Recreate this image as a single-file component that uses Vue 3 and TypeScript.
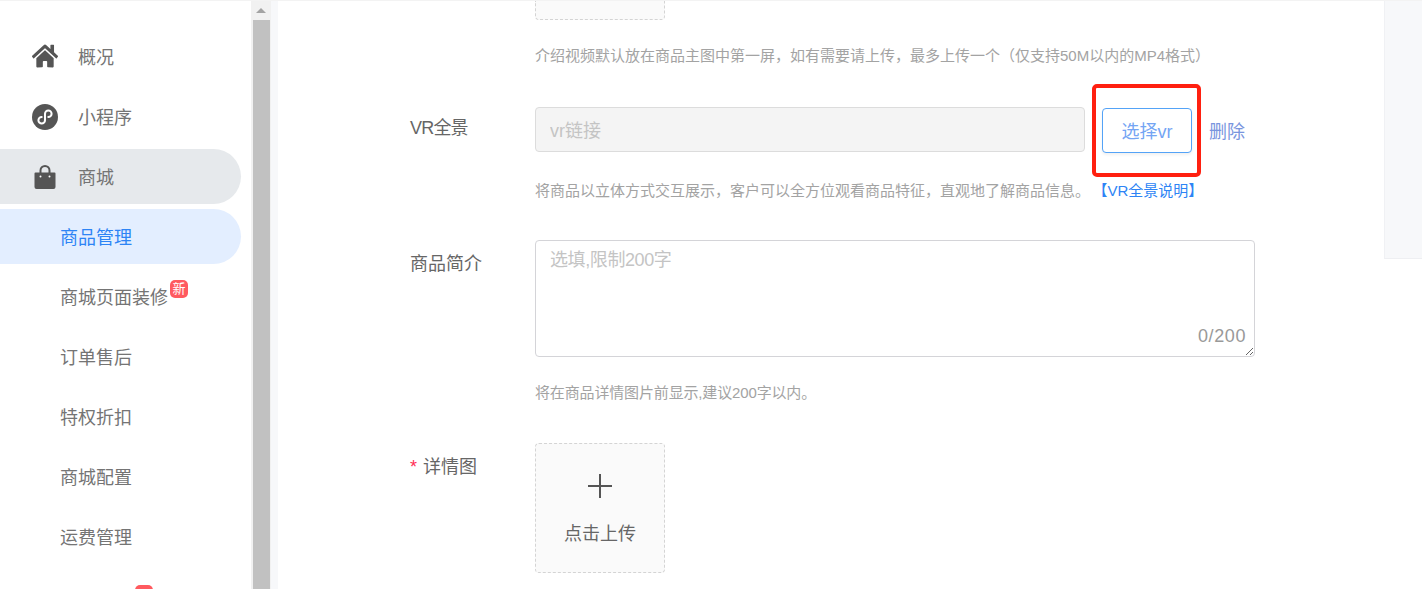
<script setup lang="ts">
interface MenuItem {
  label: string
  icon?: 'home' | 'mini' | 'bag'
  badge?: 'top' | 'low'
  state?: 'open' | 'active'
}

const menu: MenuItem[] = [
  { label: '概况', icon: 'home' },
  { label: '小程序', icon: 'mini' },
  { label: '商城', icon: 'bag', state: 'open' },
  { label: '商品管理', state: 'active' },
  { label: '商城页面装修', badge: 'top' },
  { label: '订单售后' },
  { label: '特权折扣' },
  { label: '商城配置' },
  { label: '运费管理' },
  { label: '', badge: 'low' }
]
</script>

<template>
  <div class="page">
    <aside class="sidebar">
      <ul class="menu">
        <li
          v-for="item in menu"
          :key="item.label"
          class="menu-item"
          :class="[item.state, { child: !item.icon }]"
        >
          <span v-if="item.icon" class="menu-icon">
            <svg v-if="item.icon === 'home'" class="i-home" viewBox="0 0 576 512" preserveAspectRatio="none">
              <path fill="#555" d="M280.37 148.26L96 300.11V464a16 16 0 0 0 16 16l112.06-.29a16 16 0 0 0 15.92-16V368a16 16 0 0 1 16-16h64a16 16 0 0 1 16 16v95.64a16 16 0 0 0 16 16.05L464 480a16 16 0 0 0 16-16V300L295.67 148.26a12.19 12.19 0 0 0-15.3 0zM571.6 251.47L488 182.56V44.05a12 12 0 0 0-12-12h-56a12 12 0 0 0-12 12v72.61L318.47 43a48 48 0 0 0-61 0L4.34 251.47a12 12 0 0 0-1.6 16.9l25.5 31A12 12 0 0 0 45.15 301l235.22-193.74a12.19 12.19 0 0 1 15.3 0L530.9 301a12 12 0 0 0 16.9-1.6l25.5-31a12 12 0 0 0-1.7-16.93z" />
            </svg>
            <svg v-else-if="item.icon === 'mini'" class="i-mini" viewBox="0 0 26 26">
              <circle cx="13" cy="13" r="13" fill="#555" />
              <path fill="none" stroke="#fff" stroke-width="2" stroke-linecap="round" d="M9.700 12.900a3.300 3.300 0 1 0 3.300 3.300V9.800a3.300 3.300 0 1 1 3.300 3.300" />
            </svg>
            <svg v-else class="i-bag" viewBox="0 0 22 24">
              <path fill="none" stroke="#555" stroke-width="2" d="M6.500 9V5.500a4.500 4.500 0 0 1 9 0V9" />
              <path fill="#555" d="M1.500 7.500h19a1 1 0 0 1 1 1V22a2 2 0 0 1-2 2h-17a2 2 0 0 1-2-2V8.500a1 1 0 0 1 1-1z" />
              <circle cx="6.500" cy="11.500" r="1" fill="#fff" />
              <circle cx="15.500" cy="11.500" r="1" fill="#fff" />
            </svg>
          </span>
          <span class="menu-label" :class="{ blank: !item.label }">{{ item.label }}</span>
          <span v-if="item.badge" class="badge" :class="item.badge">{{ item.badge === 'top' ? '新' : '' }}</span>
        </li>
      </ul>
    </aside>

    <div class="scrollbar">
      <span class="arrow"></span>
      <span class="thumb"></span>
    </div>

    <main class="main">
      <div class="form">
        <div class="row row-video">
          <span class="label"></span>
          <div class="control">
            <div class="upload upload-cut"></div>
            <p class="hint hint-video">介绍视频默认放在商品主图中第一屏，如有需要请上传，最多上传一个（仅支持50M以内的MP4格式）</p>
          </div>
        </div>

        <div class="row row-vr">
          <span class="label">VR全景</span>
          <div class="control">
            <div class="vr-line">
              <input class="vr-input" type="text" placeholder="vr链接" disabled />
              <span class="pick-wrap">
                <button class="pick" type="button">选择vr</button>
                <span class="annotation"></span>
              </span>
              <a class="remove">删除</a>
            </div>
            <p class="hint hint-vr">将商品以立体方式交互展示，客户可以全方位观看商品特征，直观地了解商品信息。<a class="vr-link">【VR全景说明】</a></p>
          </div>
        </div>

        <div class="row row-intro">
          <span class="label">商品简介</span>
          <div class="control">
            <div class="text-wrap">
              <textarea class="textarea" placeholder="选填,限制200字"></textarea>
              <span class="count">0/200</span>
            </div>
            <p class="hint hint-intro">将在商品详情图片前显示,建议200字以内。</p>
          </div>
        </div>

        <div class="row row-detail">
          <span class="label"><i class="star">*</i>详情图</span>
          <div class="control">
            <div class="upload">
              <svg class="plus" viewBox="0 0 24 24">
                <path fill="none" stroke="#555" stroke-width="2" d="M12 0v24M0 12h24" />
              </svg>
              <span class="upload-text">点击上传</span>
            </div>
          </div>
        </div>
      </div>
      <div class="side-panel"></div>
    </main>
  </div>
</template>

<style>
html,
body {
  margin: 0;
  background: #fff;
  overflow: hidden;
}
</style>

<style scoped>
.page {
  display: flex;
  width: 1422px;
  height: 589px;
  overflow: hidden;
  box-sizing: border-box;
  background: #f7f8fa;
  border-top: 1px solid #f3f3f3;
  font-family: "Liberation Sans", "Noto Sans CJK SC", sans-serif;
  color: #666;
}

.sidebar {
  flex: none;
  width: 251px;
  height: 100%;
  background: #fff;
}

.menu {
  list-style: none;
  margin: 0;
  padding: 28px 10px 0 0;
}

.menu-item {
  display: flex;
  align-items: center;
  height: 55px;
  margin-bottom: 5px;
  padding-left: 32px;
  border-radius: 0 27.5px 27.5px 0;
  font-size: 18px;
  color: #747474;
}

.menu-item.child {
  padding-left: 60px;
}

.menu-item.open {
  background: #e6e9ec;
}

.menu-item.active {
  background: #e3eeff;
  color: #2d84f5;
}

.menu-icon {
  display: flex;
  justify-content: center;
  align-items: center;
  flex: none;
  width: 26px;
  margin-right: 20px;
}

.i-home {
  width: 27px;
  height: 26px;
  margin-bottom: 1px;
}

.i-mini {
  width: 26px;
  height: 26px;
}

.i-bag {
  width: 22px;
  height: 24px;
}

.menu-label {
  line-height: 24px;
  padding-top: 2px;
}

.menu-label.blank {
  width: 72px;
}

.badge {
  align-self: flex-start;
  width: 18px;
  height: 18px;
  border-radius: 5px;
  background: #ff5a5f;
  color: #fff;
  font-size: 13px;
  line-height: 18px;
  text-align: center;
}

.badge.top {
  margin: 11px 0 0 2px;
}

.badge.low {
  margin: 16px 0 0 3px;
}

.scrollbar {
  flex: none;
  display: flex;
  flex-direction: column;
  align-items: center;
  width: 20px;
  height: 100%;
  background: #f1f1f1;
}

.arrow {
  flex: none;
  width: 0;
  height: 0;
  margin: 7px 0;
  border-left: 5px solid transparent;
  border-right: 5px solid transparent;
  border-bottom: 5px solid #a3a3a3;
}

.thumb {
  flex: 1;
  width: 17px;
  background: #c1c1c1;
}

.main {
  flex: none;
  display: flex;
  justify-content: space-between;
  align-items: flex-start;
  width: 1144px;
  height: 100%;
  margin-left: 7px;
  background: #fff;
}

.form {
  padding-left: 132px;
}

.side-panel {
  width: 38px;
  height: 258px;
  box-sizing: border-box;
  background: #f7f8fa;
  border-left: 1px solid #f0f1f4;
  border-bottom: 1px solid #eeeff2;
}

.row {
  display: flex;
}

.label {
  flex: none;
  width: 125px;
  font-size: 18px;
  line-height: 24px;
  color: #666;
}

.control {
  flex: none;
  width: 720px;
}

.hint {
  margin: 0;
  font-size: 15px;
  line-height: 20px;
  color: #a3a3a3;
}

.upload {
  display: flex;
  flex-direction: column;
  align-items: center;
  width: 130px;
  height: 130px;
  box-sizing: border-box;
  padding-top: 30px;
  background: #fafafa;
  border: 1px dashed #d4d4d4;
  border-radius: 4px;
}

.upload-cut {
  height: 19px;
  padding: 0;
  border-top: none;
  border-radius: 0 0 4px 4px;
}

.hint-video {
  margin-top: 26px;
}

.row-vr {
  margin-top: 41px;
}

.row-vr .label {
  padding-top: 9px;
  letter-spacing: -0.8px;
}

.vr-line {
  display: flex;
  align-items: flex-start;
  height: 46px;
}

.vr-input {
  width: 550px;
  height: 45px;
  box-sizing: border-box;
  padding: 4px 14px 0;
  background: #f4f4f4;
  border: 1px solid #dcdcdc;
  border-radius: 4px;
  font: inherit;
  font-size: 18px;
  outline: none;
}

.vr-input::placeholder {
  color: #c4c4c4;
}

.pick-wrap {
  position: relative;
  margin: 1px 17px 0;
}

.pick {
  display: block;
  width: 90px;
  height: 45px;
  padding: 0 0 2px;
  background: #fff;
  border: 1px solid #54a3f7;
  border-radius: 4px;
  box-shadow: 0 2px 3px rgba(0, 0, 0, 0.06);
  font: inherit;
  font-size: 18px;
  color: #74a5f4;
}

.annotation {
  position: absolute;
  left: -10px;
  top: -24px;
  width: 109px;
  height: 93px;
  box-sizing: border-box;
  border: 4px solid #ff2010;
  border-radius: 5px;
  pointer-events: none;
}

.remove {
  font-size: 18px;
  line-height: 50px;
  color: #7995de;
}

.hint-vr {
  margin-top: 28px;
}

.vr-link {
  margin-left: 10px;
  color: #2d84f5;
}

.row-intro {
  margin-top: 39px;
}

.row-intro .label {
  padding-top: 12px;
}

.text-wrap {
  position: relative;
  width: 720px;
  height: 117px;
}

.textarea {
  display: block;
  width: 100%;
  height: 100%;
  box-sizing: border-box;
  padding: 6px 14px;
  background: #fff;
  border: 1px solid #d4d4d8;
  border-radius: 4px;
  font: inherit;
  font-size: 18px;
  line-height: 26px;
  outline: none;
}

.textarea::placeholder {
  color: #c4c4c4;
  letter-spacing: -0.4px;
}

.count {
  position: absolute;
  right: 9px;
  bottom: 8px;
  font-size: 18px;
  line-height: 26px;
  letter-spacing: 0.6px;
  color: #999;
}

.hint-intro {
  margin-top: 26px;
  letter-spacing: -0.15px;
}

.row-detail {
  margin-top: 40px;
}

.row-detail .label {
  padding-top: 12px;
}

.star {
  margin-right: 6px;
  font-style: normal;
  color: #ff2d55;
}

.plus {
  width: 24px;
  height: 24px;
}

.upload-text {
  margin-top: 24px;
  font-size: 18px;
  line-height: 24px;
  color: #666;
}
</style>
